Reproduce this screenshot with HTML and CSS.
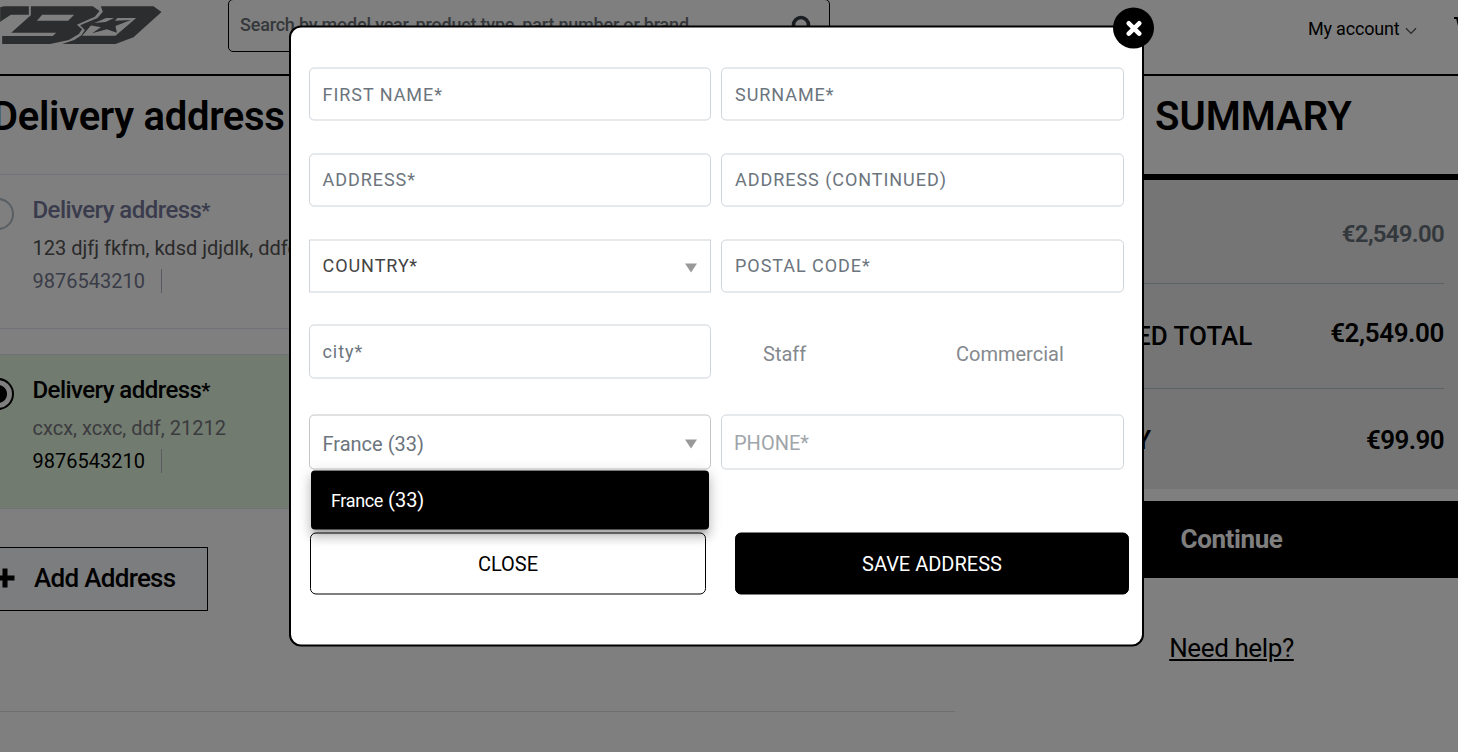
FILE: index.html
```html
<!DOCTYPE html>
<html lang="en">
<head>
<meta charset="utf-8">
<title>Delivery address</title>
<link rel="stylesheet" href="styles.css">
</head>
<body>
<div class="page">
  <header class="header">
    <svg class="logo" viewBox="0 0 500 150" width="167" height="50" aria-hidden="true">
      <g fill="#595b5d">
        <path d="M0 22 12 19H86V44H32L8 60 0 66Z"/>
        <path d="M92 19H278L298 33 284 50 230 74 246 88 236 102 206 120 150 132H6V108H158L168 98H33L92 46ZM126 44 110 62H204L222 44Z" fill-rule="evenodd"/>
        <path d="M302 19H460L484 36 400 112 346 132H186L222 120 244 106 254 90 240 76 292 54 308 35ZM318 54 276 72 246 107H346L408 54Z" fill-rule="evenodd"/>
        <path d="M360 46 344 62 392 60 346 78 350 98 320 88 276 100 302 82 250 72 316 66Z"/>
      </g>
    </svg>
    <div class="search">
      <span class="search-text">Search by model year, product type, part number or brand</span>
      <svg class="search-icon" viewBox="0 0 24 24" width="24" height="24"><circle cx="11" cy="11" r="7.5"/><path d="M16.5 16.5 23 23"/></svg>
    </div>
    <nav class="account">My account
      <svg viewBox="0 0 12 8" width="12" height="8"><path d="M1 1.2 6 6.4 11 1.2"/></svg>
    </nav>
    <svg class="cart" viewBox="0 0 24 20" width="24" height="20"><path d="M0 1H3L6 13H20L23 4H4"/></svg>
  </header>
  <div class="columns">
    <main class="delivery">
      <h1 class="title">Delivery address</h1>
      <section class="card">
        <span class="radio"></span>
        <div class="card-body">
          <h2 class="card-name">Delivery address<small>*</small></h2>
          <p class="card-line dark">123 djfj fkfm, kdsd jdjdlk, ddfdf</p>
          <p class="card-line phone">9876543210</p>
        </div>
      </section>
      <section class="card selected">
        <span class="radio"></span>
        <div class="card-body">
          <h2 class="card-name">Delivery address<small>*</small></h2>
          <p class="card-line">cxcx, xcxc, ddf, 21212</p>
          <p class="card-line phone">9876543210</p>
        </div>
      </section>
      <div class="add"><svg viewBox="0 0 20 20" width="20" height="20"><path d="M10 .5V19.5M.5 10H19.5"/></svg>Add Address</div>
      <hr class="divider">
    </main>
    <aside class="summary">
      <h1 class="title">SUMMARY</h1>
      <div class="totals">
        <div class="row subtotal"><span></span><b>€2,549.00</b></div>
        <div class="row total"><span>ESTIMATED TOTAL</span><b>€2,549.00</b></div>
        <div class="row shipping"><span>DELIVERY</span><b>€99.90</b></div>
      </div>
      <div class="continue">Continue</div>
      <a class="help">Need help?</a>
    </aside>
  </div>
</div>
<div class="overlay">
  <div class="modal">
    <form class="form">
      <div class="field first-name">FIRST NAME*</div>
      <div class="field">SURNAME*</div>
      <div class="field raised">ADDRESS*</div>
      <div class="field raised">ADDRESS (CONTINUED)</div>
      <div class="field raised select country">COUNTRY*<i class="arrow"></i></div>
      <div class="field raised">POSTAL CODE*</div>
      <div class="field">city*</div>
      <div class="types"><span>Staff</span><span>Commercial</span></div>
      <div class="field select prefix">France (33)<i class="arrow"></i>
        <div class="options"><span class="option-name">France</span> (33)</div>
      </div>
      <div class="field phone-field">PHONE*</div>
    </form>
    <div class="actions">
      <div class="btn">CLOSE</div>
      <div class="btn save">SAVE ADDRESS</div>
    </div>
    <div class="dismiss"><svg viewBox="0 0 16 16" width="16" height="16"><path d="M2.8 2.8 13.2 13.2M13.2 2.8 2.8 13.2"/></svg></div>
  </div>
</div>
</body>
</html>
```
FILE: styles.css
```css
* { box-sizing: border-box; margin: 0; }
body { width: 1458px; height: 752px; overflow: hidden; background: #fff; font-family: Roboto, sans-serif; color: #000; }
.page { width: 1458px; height: 752px; overflow: hidden; }
.header { display: flex; height: 76px; border-bottom: 2px solid #000; overflow: hidden; }
.logo { flex: none; margin-right: 61px; }
.search { display: flex; flex: none; justify-content: space-between; width: 602px; height: 53px; margin-top: -1px; padding: 12px 15px 0 11px; border: 1px solid #000; border-radius: 5px; color: #6a7076; font-size: 18px; font-weight: 500; letter-spacing: -.2px; line-height: 25px; }
.search-icon { margin-top: 2px; fill: none; stroke: #343c44; stroke-width: 3.6; }
.account { flex: none; width: 146px; margin-left: 478px; padding-top: 18px; font-size: 18px; letter-spacing: -.2px; line-height: 22px; white-space: nowrap; }
.account svg { margin-left: 1px; fill: none; stroke: #555; stroke-width: 1.3; }
.cart { flex: none; margin-top: 17px; fill: none; stroke: #000; stroke-width: 2; }
.columns { display: flex; justify-content: space-between; }
.delivery { width: 963px; margin-left: -8px; }
.title { height: 98px; padding-top: 17px; font-size: 40px; font-weight: 600; letter-spacing: -.3px; line-height: 48px; white-space: nowrap; }
.card { display: flex; height: 155px; margin-bottom: 25px; padding: 20px 0 0; border: solid #e3e3ef; border-width: 1px 0; color: #74788f; }
.radio { flex: none; width: 32px; height: 32px; margin: 3px 18.5px 0 -10px; border: 2px solid #b0bec8; border-radius: 50%; }
.card-name { height: 37px; font-size: 24px; font-weight: 500; letter-spacing: -.55px; line-height: 30px; color: #74789a; }
.card-name small { font-size: 20px; font-weight: 700; line-height: 20px; }
.card-line { font-size: 20px; line-height: 33px; color: #76767e; white-space: nowrap; }
.card-line.dark { color: #555; }
.card-line.phone { display: inline-block; height: 24px; margin-top: 4px; padding-right: 16px; border-right: 1px solid #b4b4c4; line-height: 24px; color: #74788f; }
.selected { margin-bottom: 38px; background: #e4f6de; }
.selected .card-name, .selected .phone { color: #000; }
.selected .radio { border-color: #000; background: radial-gradient(circle, #000 8.5px, #fff 9.5px); }
.add { display: flex; align-items: center; width: 216px; height: 64px; padding: 0 0 2px 2px; border: 1px solid #000; background: #f9faff; font-size: 26px; font-weight: 500; letter-spacing: -.7px; white-space: nowrap; }
.add svg { margin-right: 19px; stroke: #000; stroke-width: 5; }
.divider { height: 1px; margin-top: 100px; border: 0; background: #dcdce0; }
.summary { width: 454px; }
.summary .title { padding-left: 151px; letter-spacing: 0; }
.totals { height: 315px; padding: 0 14px 0 0; border-top: 6px solid #000; background: #ebebeb; }
.row { display: flex; justify-content: space-between; white-space: nowrap; }
.row + .row { border-top: 1px solid #b8c6ce; }
.row b { font-weight: 600; letter-spacing: -.4px; }
.subtotal { height: 103px; padding-top: 38px; font-size: 24px; line-height: 32px; color: #66707a; }
.subtotal b { letter-spacing: -.7px; }
.total { height: 105px; padding-top: 33px; font-size: 26px; font-weight: 500; line-height: 32px; }
.total span { padding: 3px 0 0 24px; }
.shipping { padding-top: 35px; font-size: 26px; font-weight: 500; line-height: 32px; }
.shipping span { padding-left: 31px; }
.shipping b { letter-spacing: -.6px; }
.continue { height: 77px; margin-top: 12px; padding-left: 1px; background: #000; color: #fff; font-size: 26px; font-weight: 700; letter-spacing: -.4px; line-height: 76px; text-align: center; }
.help { display: block; margin-top: 54px; padding-left: 1px; font-size: 26px; letter-spacing: -.4px; line-height: 32px; text-align: center; text-decoration: underline; }
.overlay { position: absolute; inset: 0; background: rgba(0, 0, 0, .5); }
.modal { position: absolute; left: 289px; top: 25px; width: 855px; height: 621px; padding: 40px 18px 0; border: 2px solid #000; border-radius: 12px; background: #fff; transform: translateY(.5px); }
.form { display: grid; grid-template-columns: 402px 403px; grid-template-rows: 53px 53px 53px 54px 55px; row-gap: 33px; column-gap: 10px; }
.form > :nth-child(7), .form > :nth-child(8) { margin-top: -1px; margin-bottom: 1px; height: 54px; }
.form > :nth-child(9), .form > :nth-child(10) { margin-top: 2px; height: 55px; }
.field { padding: 0 13px 0 12.5px; border: 1px solid #ced4da; border-radius: 5px; color: #6c757d; font-size: 18px; letter-spacing: .95px; line-height: 52px; white-space: nowrap; }
.field:nth-child(even) { padding-left: 13px; }
.raised { line-height: 50px; }
.select { display: flex; align-items: center; justify-content: space-between; }
.country { padding-bottom: 2px; border-radius: 0; color: #444; }
.country .arrow { margin-top: 5px; }
.prefix { position: relative; padding-top: 2px; font-size: 20px; letter-spacing: 0; border-color: #c4c4c4; line-height: 50px; }
.field.phone-field { padding-left: 12px; color: #a0a5aa; font-size: 20px; letter-spacing: 0; line-height: 54px; }
.arrow { margin-top: 3px; border: solid transparent; border-width: 9px 6.5px 0; border-top-color: #999; }
.prefix .arrow { margin-top: 1px; }
.types { display: flex; padding-left: 42px; color: #85898e; font-size: 20px; line-height: 58px; }
.types span { flex: none; width: 193px; }
.types span + span { width: 150px; }
.options { position: absolute; left: 1px; top: 55px; width: 398px; height: 59px; padding-left: 20px; border-radius: 4px; background: #000; box-shadow: 0 5px 5px -3px rgba(0,0,0,.2), 0 8px 10px 1px rgba(0,0,0,.14), 0 3px 14px 2px rgba(0,0,0,.12); color: #fff; line-height: 59px; z-index: 2; }
.option-name { font-size: 18px; letter-spacing: -.35px; }
.actions { display: flex; gap: 29px; margin: 65px 0 0 1px; }
.btn { flex: none; width: 396px; height: 62px; border: 1px solid #000; border-radius: 6px; font-size: 20px; line-height: 61px; text-align: center; }
.save { width: 394px; background: #000; color: #fff; }
.dismiss { position: absolute; left: 822px; top: -20px; display: flex; align-items: center; justify-content: center; width: 41px; height: 41px; border-radius: 50%; background: #000; }
.dismiss svg { margin-top: 1px; fill: none; stroke: #fff; stroke-width: 4.6; stroke-linecap: round; }
```
